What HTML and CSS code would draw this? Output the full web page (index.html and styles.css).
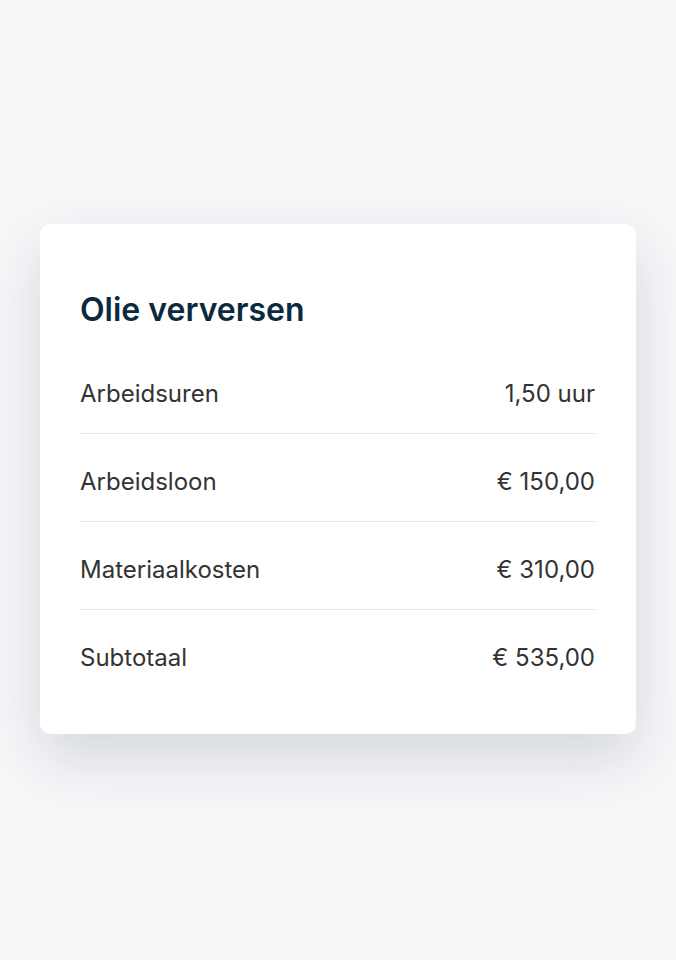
FILE: index.html
```html
<!DOCTYPE html>
<html lang="nl">
<head>
  <meta charset="UTF-8" />
  <meta name="viewport" content="width=device-width, initial-scale=1.0"/>
  <title>Olie verversen</title>
  <link rel="stylesheet" href="styles.css">
</head>
<body>
  <div class="card">
    <h2>Olie verversen</h2>
    <div class="row">
      <span>Arbeidsuren</span>
      <span>1,50 uur</span>
    </div>
    <div class="row">
      <span>Arbeidsloon</span>
      <span>€ 150,00</span>
    </div>
    <div class="row">
      <span>Materiaalkosten</span>
      <span>€ 310,00</span>
    </div>
    <div class="row">
      <span>Subtotaal</span>
      <span>€ 535,00</span>
    </div>
  </div>
</body>
</html>
```

FILE: styles.css
```css
:root {
  --bg: #f6f7f9;
  --text: #333333;
  --title: #0b2a40;
  --line: #e5e7e9;
  --radius: 10px;
  --white: #ffffff;
}
* { box-sizing: border-box; margin: 0; padding: 0; }
html { background: var(--bg); }
body {
  font-family: 'Inter', sans-serif;
  background: var(--bg);
  color: var(--text);
  min-height: 960px;
  padding: 224px 40px 40px;
}
.card {
  background: var(--white);
  border-radius: var(--radius);
  padding: 64px 40px 37px;
  box-shadow: 0 24px 60px rgba(20, 35, 50, 0.15);
}
h2 {
  font-size: 32px;
  font-weight: 600;
  line-height: 44px;
  color: var(--title);
  margin-bottom: 45px;
}
.row {
  display: flex;
  justify-content: space-between;
  font-size: 24px;
  line-height: 33px;
  padding: 31px 1px 23px 0;
  border-bottom: 1px solid var(--line);
}
.row:first-of-type { padding-top: 0; }
.row:last-child { border-bottom: none; }
```
